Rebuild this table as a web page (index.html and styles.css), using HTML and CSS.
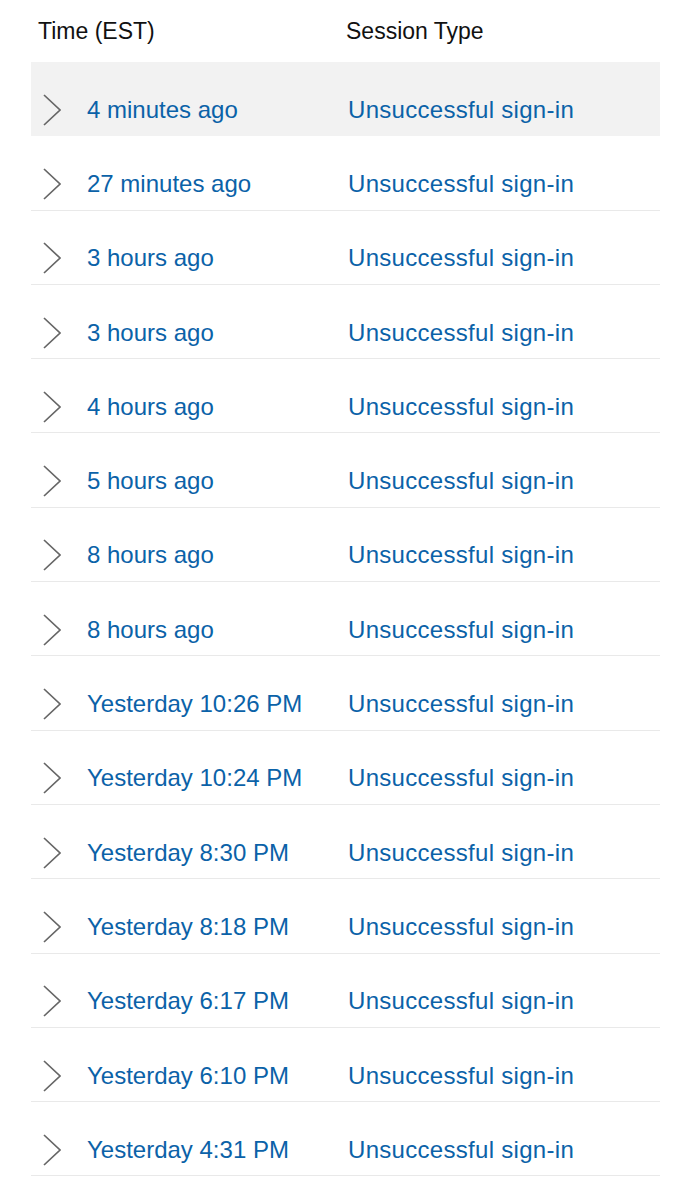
FILE: index.html
```html
<!DOCTYPE html>
<html lang="en">
  <head>
    <meta charset="UTF-8" />
    <meta name="viewport" content="width=device-width, initial-scale=1.0" />
    <title>Recent activity</title>
    <link rel="stylesheet" href="styles.css">
  </head>
  <body>
    <main class="activity">
      <div class="activity-head">
        <span>Time (EST)</span>
        <span>Session Type</span>
      </div>

      <div class="activity-list" id="lista"></div>
    </main>

    <script>
      const sessoes = [
        "4 minutes ago",
        "27 minutes ago",
        "3 hours ago",
        "3 hours ago",
        "4 hours ago",
        "5 hours ago",
        "8 hours ago",
        "8 hours ago",
        "Yesterday 10:26 PM",
        "Yesterday 10:24 PM",
        "Yesterday 8:30 PM",
        "Yesterday 8:18 PM",
        "Yesterday 6:17 PM",
        "Yesterday 6:10 PM",
        "Yesterday 4:31 PM"
      ];
      const lista = document.getElementById("lista");

      sessoes.forEach((hora, index) => {
        const row = document.createElement("div");
        row.className = index === 0 ? "activity-row selected" : "activity-row";
        row.innerHTML = `
          <svg class="chevron" width="18" height="32" viewBox="0 0 18 32">
            <polyline points="1,1 17,16 1,31" fill="none" stroke="#666" stroke-width="1.7" />
          </svg>
          <a href="#">${hora}</a>
          <a href="#" class="tipo">Unsuccessful sign-in</a>`;
        lista.appendChild(row);
      });
    </script>
  </body>
</html>
```

FILE: styles.css
```css
* {
  margin: 0;
  padding: 0;
  box-sizing: border-box;
}

body {
  font-family: "Liberation Sans", Arial, sans-serif;
  background-color: #fff;
  color: #111;
}

.activity {
  padding: 0 31px 0 31px;
}

.activity-head {
  display: grid;
  grid-template-columns: 308px 1fr;
  padding-left: 7px;
  height: 62px;
  align-items: center;
  font-size: 23px;
}

.activity-row {
  display: grid;
  grid-template-columns: 44px 261px 1fr;
  align-items: center;
  padding-left: 12px;
  padding-top: 22px;
  height: 74.3px;
  border-bottom: 1px solid #e9e9e9;
}

.activity-row.selected {
  background-color: #f2f2f2;
  border-bottom-color: #f2f2f2;
}

.activity-row a {
  color: #0b62a8;
  text-decoration: none;
  font-size: 24px;
}

.activity-row .tipo {
  letter-spacing: 0.3px;
}

.chevron {
  display: block;
}
```
